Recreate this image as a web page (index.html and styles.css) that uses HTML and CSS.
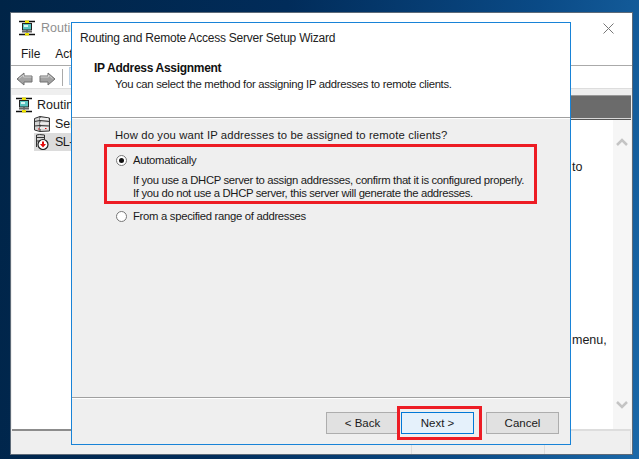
FILE: index.html
```html
<!DOCTYPE html>
<html lang="en">
<head>
<meta charset="utf-8">
<title>Routing and Remote Access Server Setup Wizard</title>
<link rel="stylesheet" href="styles.css">
</head>
<body>
<div class="desktop">
  <div class="main-window">
    <div class="main-title">
      <svg class="icon-route" viewBox="0 0 16 16"><path d="M0 1.500h16M0 14.500h16" stroke="#111" stroke-width="1.600"/><path d="M8 2v12" stroke="#555"/><path d="M6 .5h4v2.500H6zM6 13h4v2.500H6z" fill="#eee200"/><rect x="3.500" y="3.500" width="9" height="6.500" fill="#59c4c0" stroke="#222"/><rect x="5" y="5" width="4" height="2" fill="#d8f4f2"/><path d="M3 11h10v1.500H3z" fill="#666"/></svg>
      <span class="main-title-text">Routing</span>
      <svg class="close-x" viewBox="0 0 11 11"><path d="M.5.5l10 10M10.500.5l-10 10" stroke="#777" fill="none"/></svg>
    </div>
    <div class="menu"><span>File</span><span>Action</span></div>
    <div class="toolbar">
      <svg class="nav" viewBox="0 0 17 14"><path d="M1 7l7-6v3h8v6H8v3z" fill="#a2a2a2" stroke="#707070"/><path d="M3 6.500L7.500 3v2h8" fill="none" stroke="#cfcfcf"/></svg>
      <svg class="nav" viewBox="0 0 17 14"><path d="M16 7L9 1v3H1v6h8v3z" fill="#a2a2a2" stroke="#707070"/><path d="M1.500 5h8V3l4 3.500" fill="none" stroke="#cfcfcf"/></svg>
      <i class="tool-sep"></i>
      <i class="tool-box"></i>
    </div>
    <div class="panes">
      <div class="tree">
        <div class="tree-row root">
          <svg class="icon-route" viewBox="0 0 16 16"><path d="M0 1.500h16M0 14.500h16" stroke="#111" stroke-width="1.600"/><path d="M8 2v12" stroke="#555"/><path d="M6 .5h4v2.500H6zM6 13h4v2.500H6z" fill="#eee200"/><rect x="3.500" y="3.500" width="9" height="6.500" fill="#59c4c0" stroke="#222"/><rect x="5" y="5" width="4" height="2" fill="#d8f4f2"/><path d="M3 11h10v1.500H3z" fill="#666"/></svg>
          <span>Routing</span>
        </div>
        <div class="tree-row child">
          <svg class="icon-small" viewBox="0 0 16 16"><path d="M.5 2.500L6 .5l9.500 1.500v13L6 15.500.5 14z" fill="#d4d4d4" stroke="#333"/><path d="M6 .5v15M.5 5.500l5.500-1 9.500 1M.5 10l5.500-.5 9.500.5" stroke="#333" fill="none"/><path d="M6 2h8v2H6z" fill="#eee"/><path d="M6 6.500h8v2H6z" fill="#eee"/><path d="M6 11h8v2H6z" fill="#eee"/><path d="M4 13h1.500M11 12.500h1.500" stroke="#e01010" stroke-width="1.200"/></svg>
          <span>Server</span>
        </div>
        <div class="tree-row child selected">
          <svg class="icon-small" viewBox="0 0 16 16"><path d="M2.500 1l3-.5 5 .5v6h-8z" fill="#d4d4d4" stroke="#333"/><path d="M2.500 3.500h8" stroke="#333"/><path d="M2.500 7v6" stroke="#333"/><circle cx="9" cy="10.500" r="5" fill="#fff" stroke="#222" stroke-width="1.200"/><path d="M8 7.500h2v2.500h2L9 13.500 6 10h2z" fill="#e30c0c"/></svg>
          <span>SL-</span>
        </div>
      </div>
      <div class="detail">
        <div class="detail-head"></div>
        <div class="detail-body">
          <div class="detail-text">
            <p class="line-to">to</p>
            <p class="line-menu">menu,</p>
          </div>
          <div class="scrollbar">
            <svg class="chev" viewBox="0 0 12 8"><path d="M1 7l5-5 5 5" fill="none" stroke="#c4c4c4" stroke-width="2.500"/></svg>
            <svg class="chev" viewBox="0 0 12 8"><path d="M1 1l5 5 5-5" fill="none" stroke="#c4c4c4" stroke-width="2.500"/></svg>
          </div>
        </div>
      </div>
    </div>
    <div class="status"><i></i><i></i><i></i></div>
  </div>

  <div class="dialog">
    <div class="dialog-title">Routing and Remote Access Server Setup Wizard</div>
    <div class="dialog-header">
      <h1>IP Address Assignment</h1>
      <p>You can select the method for assigning IP addresses to remote clients.</p>
    </div>
    <div class="dialog-content">
      <p class="question">How do you want IP addresses to be assigned to remote clients?</p>
      <div class="highlight">
        <div class="radio-row"><span class="radio checked"></span><span>Automatically</span></div>
        <p class="hint">If you use a DHCP server to assign addresses, confirm that it is configured properly.<br>If you do not use a DHCP server, this server will generate the addresses.</p>
      </div>
      <div class="radio-row second"><span class="radio"></span><span>From a specified range of addresses</span></div>
    </div>
    <div class="dialog-footer">
      <button class="btn">&lt; Back</button>
      <span class="next-mark"><button class="btn primary">Next &gt;</button></span>
      <button class="btn">Cancel</button>
    </div>
  </div>
</div>
</body>
</html>
```

FILE: styles.css
```css
* { box-sizing: border-box; }
html, body { margin: 0; padding: 0; }
body { width: 639px; height: 459px; overflow: hidden; font-family: "Liberation Sans", Arial, sans-serif; font-size: 12px; color: #1a1a1a; }
p, h1 { margin: 0; }
.desktop { position: relative; width: 639px; height: 459px; overflow: hidden; background: linear-gradient(100deg, #002447 0%, #012c5a 40%, #0a4a86 75%, #1a68a8 100%); }

.main-window { position: absolute; left: 10px; top: 12px; width: 623px; height: 443px; background: #fff; border: 1px solid #5d6a78; display: flex; flex-direction: column; }
.main-title { height: 30px; flex: none; display: flex; align-items: center; padding: 0 18px 0 8px; gap: 6px; }
.main-title-text { color: #8f8f8f; font-size: 12.500px; flex: 1; white-space: nowrap; }
.icon-route { width: 16px; height: 16px; flex: none; }
.close-x { width: 11px; height: 11px; flex: none; }
.menu { height: 23px; flex: none; display: flex; align-items: center; gap: 15px; padding-left: 10px; border-bottom: 1px solid #aaa; }
.toolbar { height: 23px; flex: none; display: flex; align-items: flex-start; gap: 6px; padding-left: 5px; border-bottom: 1px solid #ddd; }
.nav { width: 17px; height: 14px; margin-top: 6px; }
.tool-sep { width: 1px; height: 17px; margin-top: 3px; background: #aaa; }
.tool-box { width: 14px; height: 18px; margin-top: 1px; background: #dbe9f5; border: 1px solid #b8d0e6; }
.panes { flex: 1; min-height: 0; display: flex; background: #efefef; padding: 6px 0 0 1px; }
.tree { width: 359px; background: #fff; border-bottom: 2px solid #8c8c8c; }
.tree-row { display: flex; align-items: center; gap: 5px; height: 16px; white-space: nowrap; overflow: hidden; font-size: 12.500px; }
.tree-row.root { height: 20px; padding-left: 4px; gap: 5px; }
.tree-row.child { margin-left: 22px; height: 18px; gap: 5px; width: 200px; }
.tree-row.selected { background: #dcdcdc; letter-spacing: -0.5px; }
.icon-small { width: 16px; height: 16px; flex: none; }
.detail { flex: 1; min-width: 0; display: flex; flex-direction: column; background: #fff; border-bottom: 2px solid #ddd; margin-right: 1px; }
.detail-head { height: 23px; flex: none; background: #6b6b6b; border-top: 1px solid #999; box-shadow: 0 1px 0 #d8d8d8, 0 2px 0 #555; }
.detail-body { flex: 1; min-height: 0; display: flex; margin-top: 2px; }
.detail-text { flex: 1; padding-left: 201px; white-space: nowrap; overflow: hidden; font-size: 12.500px; }
.line-to { margin-top: 40px; }
.line-menu { margin-top: 159px; }
.scrollbar { width: 18px; flex: none; background: #f6f6f6; display: flex; flex-direction: column; justify-content: space-between; align-items: center; padding: 18px 0 20px; }
.chev { width: 12px; height: 8px; }
.status { height: 23px; flex: none; background: #efefef; display: flex; justify-content: flex-end; }
.status i { width: 1px; background: #ddd; }
.status i:nth-child(1) { margin-right: 132px; }
.status i:nth-child(2) { margin-right: 85px; }
.status i:nth-child(3) { margin-right: 1px; }

.dialog { position: absolute; left: 71px; top: 22px; width: 500px; height: 423px; background: #fff; border: 1px solid #1883d7; display: flex; flex-direction: column; }
.dialog-title { height: 28px; flex: none; padding: 8px 0 0 8px; font-size: 12px; letter-spacing: -0.23px; color: #222; white-space: nowrap; }
.dialog-header { height: 66px; flex: none; padding: 10px 0 0 22px; }
.dialog-header h1 { font-size: 12px; font-weight: bold; letter-spacing: -0.3px; color: #111; line-height: 14px; }
.dialog-header p { padding-left: 21px; line-height: 16px; margin-top: 1px; font-size: 11.300px; letter-spacing: -0.3px; }
.dialog-content { flex: 1; min-height: 0; background: #efefef; border-top: 1px solid #a0a0a0; box-shadow: inset 0 1px 0 #fff; padding: 9px 0 0 43px; border-bottom: 1px solid #a0a0a0; }
.question { line-height: 16px; font-size: 11.300px; letter-spacing: 0.13px; }
.highlight { width: 433px; height: 60px; margin: 1px 0 0 -11px; border: 3px solid #ed1c24; padding: 5px 0 0 9px; }
.radio-row { display: flex; align-items: center; gap: 6px; height: 16px; font-size: 11.300px; letter-spacing: -0.3px; line-height: 16px; }
.radio-row.second { margin-top: 4px; margin-left: 1px; }
.radio { width: 11px; height: 11px; flex: none; border-radius: 50%; background: #fff; border: 1px solid #777; display: flex; align-items: center; justify-content: center; }
.radio.checked::before { content: ""; width: 5px; height: 5px; border-radius: 50%; background: #111; }
.hint { margin: 6px 0 0 17px; font-size: 11.300px; letter-spacing: -0.33px; line-height: 13px; white-space: nowrap; }
.dialog-footer { height: 46px; flex: none; background: #efefef; box-shadow: inset 0 1px 0 #fff; display: flex; align-items: flex-start; padding: 14px 0 0 254px; }
.btn { width: 73px; height: 22px; padding: 0; background: #e1e1e1; border: 1px solid #adadad; font: 11.500px "Liberation Sans", Arial, sans-serif; color: #1a1a1a; }
.next-mark { display: block; flex: none; border: 3px solid #ed1c24; padding: 3px 0 0 1px; margin: -6px 4px 0 -2px; width: 85px; height: 34px; }
.btn.primary { background: #e5f1fb; border: 1px solid #0078d7; }
```
